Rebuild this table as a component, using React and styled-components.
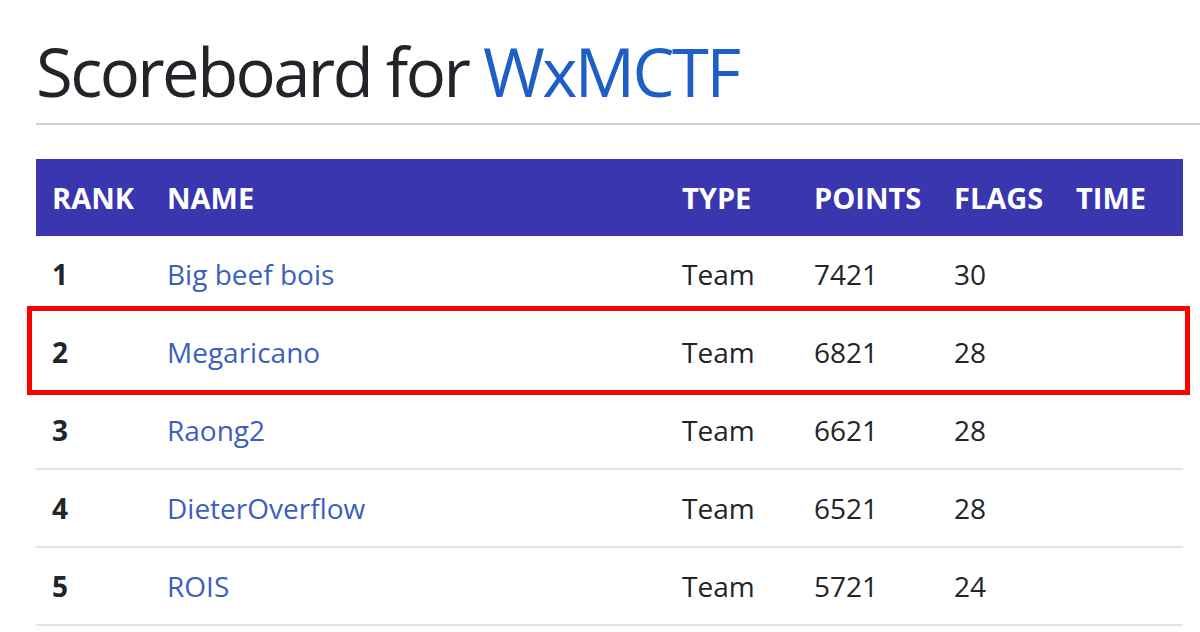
import React from "react";
import styled, { createGlobalStyle } from "styled-components";

const GlobalStyle = createGlobalStyle`
  html, body {
    margin: 0;
    padding: 0;
    background: #fff;
    overflow-x: hidden;
  }
  body {
    font-family: "Open Sans", "Noto Sans", sans-serif;
    color: #212529;
  }
`;

const COLUMNS = "115px 515px 132px 140px 122px 123px";

const TEAMS = [
  { rank: 1, name: "Big beef bois", type: "Team", points: 7421, flags: 30 },
  { rank: 2, name: "Megaricano", type: "Team", points: 6821, flags: 28 },
  { rank: 3, name: "Raong2", type: "Team", points: 6621, flags: 28 },
  { rank: 4, name: "DieterOverflow", type: "Team", points: 6521, flags: 28 },
  { rank: 5, name: "ROIS", type: "Team", points: 5721, flags: 24 },
];

const Page = styled.main`
  padding: 30px 0 0 36px;
`;

const Title = styled.h1`
  margin: 0;
  font-size: 67px;
  line-height: 83px;
  font-weight: 400;
  letter-spacing: -2.6px;
  color: #212529;
  white-space: nowrap;
`;

const Event = styled.a`
  color: #1d5fc6;
  text-decoration: none;
`;

const Rule = styled.hr`
  margin: 10px 0 34px;
  border: 0;
  border-top: 2px solid #d0d0d0;
`;

const Board = styled.div`
  width: 1147px;
`;

const HeadRow = styled.div`
  display: grid;
  grid-template-columns: ${COLUMNS};
  align-items: center;
  height: 77px;
  background: #3936b0;
  color: #fff;
`;

const HeadCell = styled.div`
  padding: 0 16px;
  font-size: 29px;
  font-weight: 700;
  text-transform: uppercase;
  white-space: nowrap;
`;

const Row = styled.div`
  position: relative;
  display: grid;
  grid-template-columns: ${COLUMNS};
  align-items: center;
  height: 78px;
  box-sizing: border-box;
  border-bottom: 2px solid ${(p) => (p.$bare ? "transparent" : "#e2e4e7")};

  ${(p) =>
    p.$highlight &&
    `
    &::after {
      content: "";
      position: absolute;
      top: -8px;
      bottom: -5px;
      left: -9px;
      right: -7px;
      border: 5px solid #ff0000;
      pointer-events: none;
    }
  `}
`;

const Cell = styled.div`
  padding: 0 16px;
  font-size: 28px;
  font-weight: ${(p) => (p.$bold ? 700 : 400)};
  white-space: nowrap;
`;

const TeamLink = styled.a`
  color: #3a5fc0;
  text-decoration: none;
`;

export default function App() {
  const highlighted = 2;
  return (
    <>
      <GlobalStyle />
      <Page>
        <Title>
          Scoreboard for <Event href="#">WxMCTF</Event>
        </Title>
        <Rule />
        <Board>
          <HeadRow>
            <HeadCell>Rank</HeadCell>
            <HeadCell>Name</HeadCell>
            <HeadCell>Type</HeadCell>
            <HeadCell>Points</HeadCell>
            <HeadCell>Flags</HeadCell>
            <HeadCell>Time</HeadCell>
          </HeadRow>
          {TEAMS.map((t) => (
            <Row
              key={t.rank}
              $highlight={t.rank === highlighted}
              $bare={t.rank === highlighted || t.rank === highlighted - 1}
            >
              <Cell $bold>{t.rank}</Cell>
              <Cell>
                <TeamLink href="#">{t.name}</TeamLink>
              </Cell>
              <Cell>{t.type}</Cell>
              <Cell>{t.points}</Cell>
              <Cell>{t.flags}</Cell>
              <Cell></Cell>
            </Row>
          ))}
        </Board>
      </Page>
    </>
  );
}
